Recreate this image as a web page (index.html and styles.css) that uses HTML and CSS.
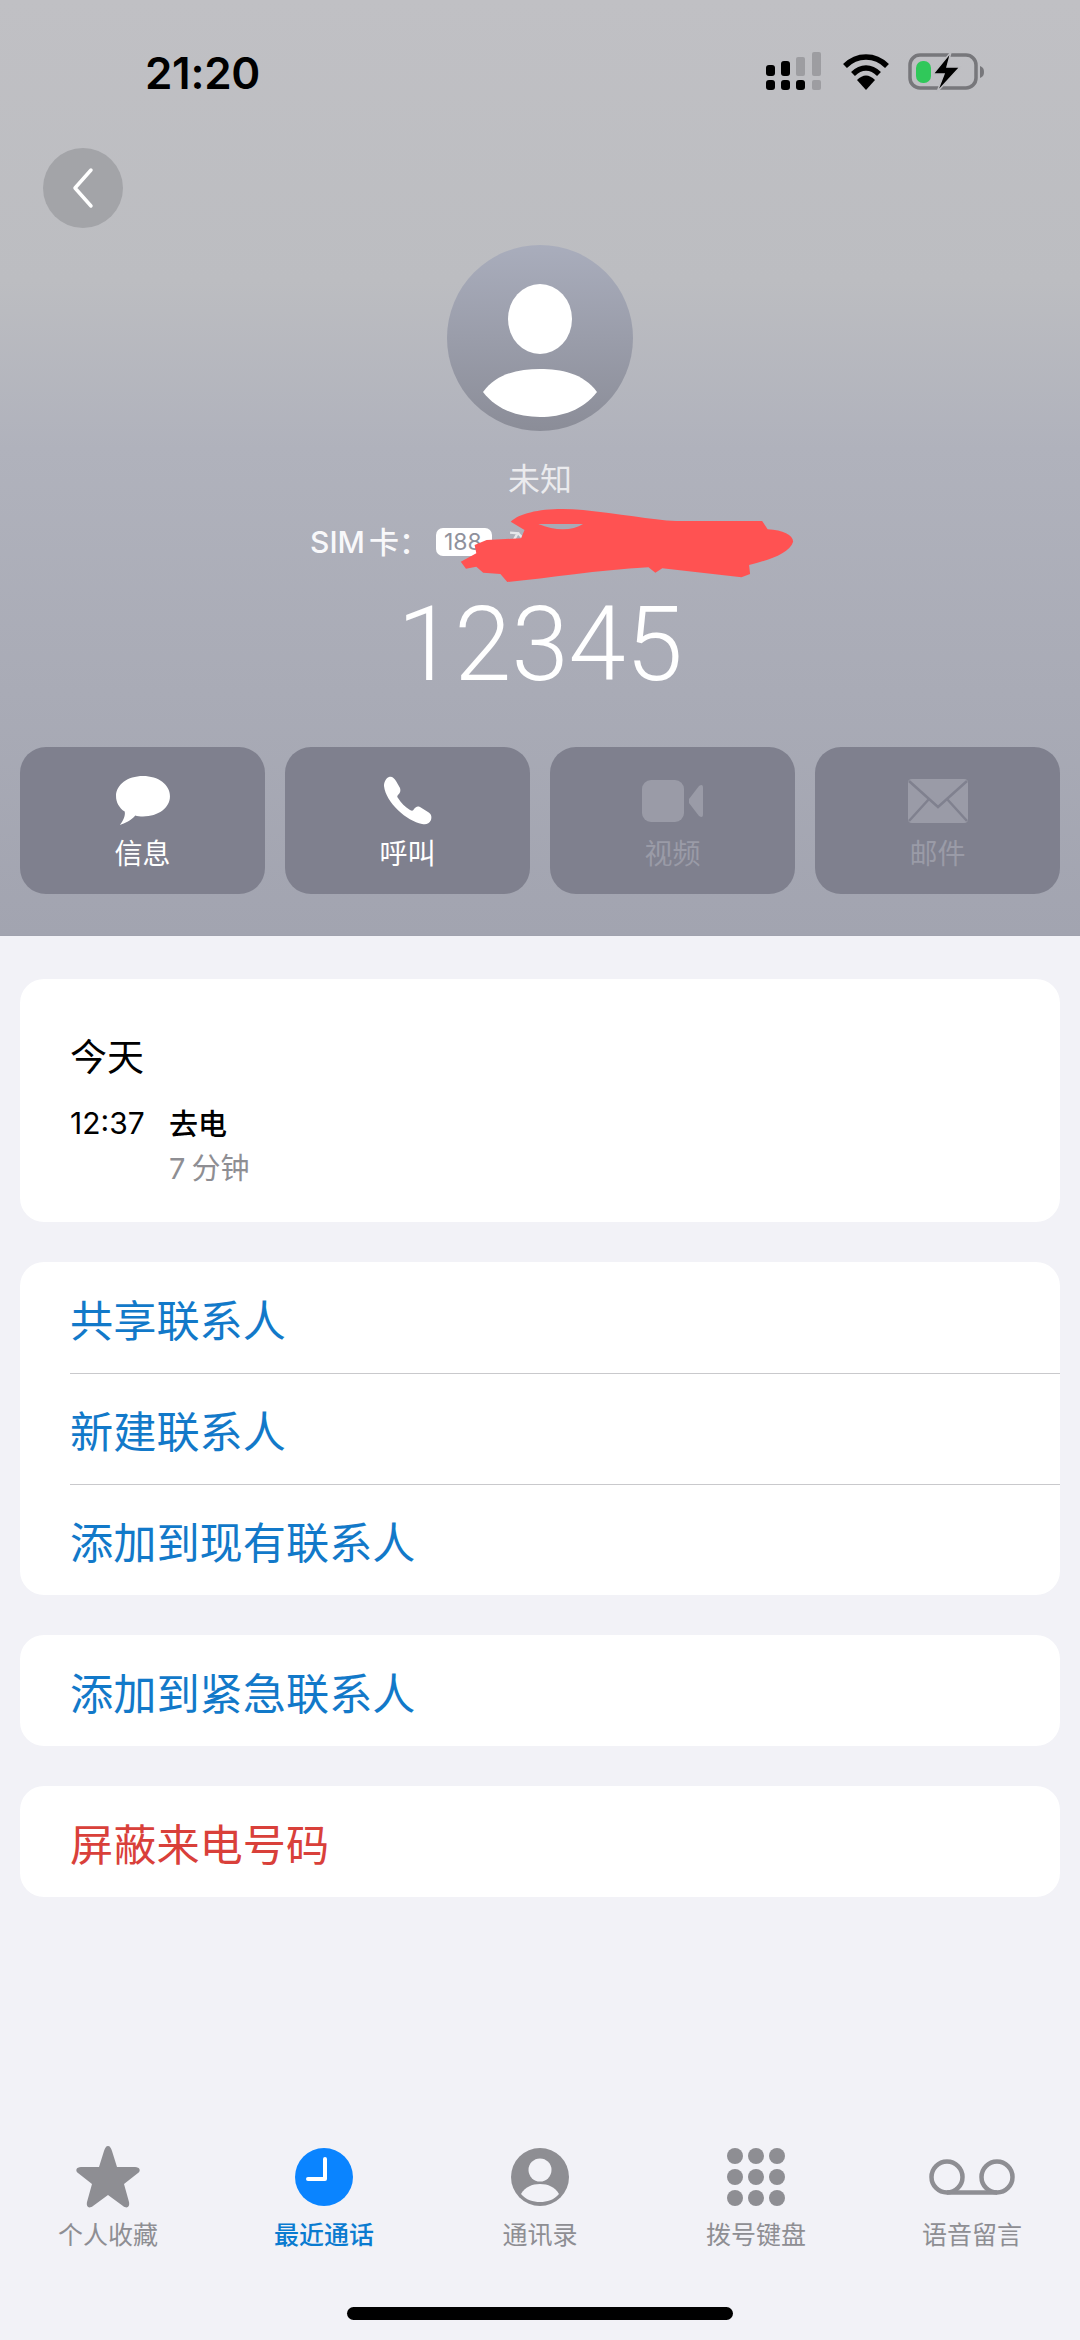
FILE: index.html
```html
<!DOCTYPE html>
<html lang="zh">
<head>
<meta charset="utf-8">
<title>未知</title>
<link rel="stylesheet" href="styles.css">
</head>
<body>
<div class="page">
  <header class="hero">
    <div class="status">
      <span class="clock">21:20</span>
      <div class="status-icons">
        <svg class="sig" width="58" height="40" viewBox="0 0 58 40"><g fill="#000"><rect x="0" y="13" width="9" height="11" rx="3"/><rect x="15" y="9" width="9" height="15" rx="3"/><rect x="0" y="28" width="9" height="10" rx="3"/><rect x="15" y="28" width="9" height="10" rx="3"/><rect x="30" y="28" width="9" height="10" rx="3"/></g><g fill="#9d9da1"><rect x="30" y="5" width="9" height="19" rx="2"/><rect x="46" y="0" width="9" height="24" rx="2"/><rect x="46" y="28" width="9" height="10" rx="2"/></g></svg>
        <svg class="wifi" width="48" height="38" viewBox="0 0 48 38"><g fill="none" stroke="#000" stroke-width="5.5"><path d="M3 13C15 1 33 1 45 13"/><path d="M11 21C19 13 29 13 37 21"/></g><path d="M15 27C21 21 27 21 33 27L24 37Z" fill="#000"/></svg>
        <svg class="batt" width="78" height="40" viewBox="0 0 78 40"><rect x="2" y="3" width="66" height="33" rx="10" fill="none" stroke="#77777b" stroke-width="3.5"/><path d="M72 14c3 1 4 3 4 6s-1 5-4 6z" fill="#77777b"/><rect x="8" y="9" width="15" height="22" rx="7" fill="#30c85a"/><path d="M43 0L25 22H36L29 40L52 15H39Z" fill="#000" stroke="#bdbdc1" stroke-width="1.5"/></svg>
      </div>
    </div>
    <button class="back" type="button"><svg width="24" height="42" viewBox="0 0 24 42"><path d="M20 3L4 21L20 39" fill="none" stroke="#fff" stroke-width="3.5" stroke-linecap="round" stroke-linejoin="round"/></svg></button>
    <div class="avatar">
      <svg width="186" height="186" viewBox="0 0 186 186"><ellipse cx="93" cy="74" rx="32" ry="35" fill="#fff"/><path d="M36 147C50 128 72 124 93 124S136 128 150 147C136 165 115 172 93 172S50 165 36 147Z" fill="#fff"/></svg>
    </div>
    <div class="name">未知</div>
    <div class="sim"><span class="sim-label">SIM 卡：</span><span class="chip">188</span></div>
    <div class="number">12345</div>
    <div class="actions">
      <div class="action">
        <svg width="58" height="54" viewBox="0 0 58 54"><path d="M29 1C45 1 57 10 57 22S45 43 29 43C26 43 23 43 21 42C17 47 10 50 5 52C8 48 11 43 10 38C4 34 1 28 1 22C1 10 13 1 29 1Z" fill="#fff"/></svg>
        <span>信息</span>
      </div>
      <div class="action">
        <svg width="50" height="50" viewBox="0 0 50 50"><path d="M6 1C9 0 11 2 13 5L17 12C18 15 17 17 15 19C14 20 14 21 15 22C18 27 22 31 27 34C29 35 30 35 31 33C33 31 34 30 37 31L45 36C48 38 49 40 48 44C46 48 43 49 39 48C24 45 3 27 1 10C1 6 3 2 6 1Z" fill="#fff"/></svg>
        <span>呼叫</span>
      </div>
      <div class="action off">
        <svg width="62" height="42" viewBox="0 0 62 42"><rect x="0" y="0" width="42" height="42" rx="9" fill="#9a9ba7"/><path d="M47 19L57 6C60 4 61 5 61 8V34C61 37 60 38 57 36L47 23Z" fill="#9a9ba7"/></svg>
        <span>视频</span>
      </div>
      <div class="action off">
        <svg width="60" height="44" viewBox="0 0 60 44"><rect x="0" y="0" width="60" height="44" rx="4" fill="#9a9ba7"/><path d="M1 2L30 28L59 2M1 42L21 20M59 42L39 20" fill="none" stroke="#80818f" stroke-width="2.5"/></svg>
        <span>邮件</span>
      </div>
    </div>
    <svg class="scribble" width="540" height="260" viewBox="0 0 1568 780" preserveAspectRatio="none"><path d="M668 248L690 250L680 268M690 248L708 268" fill="none" stroke="#e6e7ea" stroke-width="7"/><path d="M670 215C700 185 780 170 880 180C980 190 1080 210 1150 213L1400 213L1416 238C1460 240 1490 255 1490 275C1480 310 1420 330 1362 345L1365 372L1340 382L1110 355L1090 368L1070 352C920 360 780 385 660 396L640 372L590 368L570 350L540 356L525 335L570 310L565 285L600 270L700 265L710 240Z" fill="#ff5252"/><path d="M750 222L880 222C850 242 800 244 750 222Z" fill="#a8aab5"/></svg>
  </header>

  <main class="lists">
    <section class="card log">
      <div class="day">今天</div>
      <div class="entry">
        <span class="time">12:37</span>
        <div>
          <div class="kind">去电</div>
          <div class="dur">7 分钟</div>
        </div>
      </div>
    </section>
    <section class="card">
      <div class="row blue">共享联系人</div>
      <div class="row blue">新建联系人</div>
      <div class="row blue">添加到现有联系人</div>
    </section>
    <section class="card"><div class="row blue">添加到紧急联系人</div></section>
    <section class="card"><div class="row red">屏蔽来电号码</div></section>
  </main>

  <nav class="tabs">
    <div class="tab">
      <svg width="66" height="64" viewBox="0 0 66 64"><path d="M33 1C35 1 36 3 37 6L42 22L60 22C65 22 66 26 63 28L49 39L54 57C55 62 52 64 48 61L33 50L18 61C14 64 11 62 12 57L17 39L3 28C0 26 1 22 6 22L24 22L29 6C30 3 31 1 33 1Z" fill="#8e8e93"/></svg>
      <span>个人收藏</span>
    </div>
    <div class="tab on">
      <svg width="60" height="60" viewBox="0 0 60 60"><circle cx="30" cy="30" r="29" fill="#0a84ff"/><path d="M31 12V32H14" fill="none" stroke="#fff" stroke-width="4" stroke-linejoin="round" stroke-linecap="round"/></svg>
      <span>最近通话</span>
    </div>
    <div class="tab">
      <svg width="60" height="60" viewBox="0 0 60 60"><circle cx="30" cy="30" r="29" fill="#8e8e93"/><circle cx="30" cy="23" r="11.5" fill="#f2f2f7"/><path d="M11 47C15 40 22 37 30 37S45 40 49 47C44 53 37 55 30 55S16 53 11 47Z" fill="#f2f2f7"/></svg>
      <span>通讯录</span>
    </div>
    <div class="tab">
      <svg width="60" height="60" viewBox="0 0 60 60"><g fill="#8e8e93"><circle cx="9" cy="9" r="8"/><circle cx="30" cy="9" r="8"/><circle cx="51" cy="9" r="8"/><circle cx="9" cy="30" r="8"/><circle cx="30" cy="30" r="8"/><circle cx="51" cy="30" r="8"/><circle cx="9" cy="51" r="8"/><circle cx="30" cy="51" r="8"/><circle cx="51" cy="51" r="8"/></g></svg>
      <span>拨号键盘</span>
    </div>
    <div class="tab">
      <svg width="86" height="40" viewBox="0 0 86 40"><g fill="none" stroke="#8e8e93" stroke-width="4.5"><circle cx="18" cy="20" r="15.5"/><circle cx="68" cy="20" r="15.5"/><path d="M18 35.5H68"/></g></svg>
      <span>语音留言</span>
    </div>
  </nav>
  <div class="home"></div>
</div>
</body>
</html>
```

FILE: styles.css
```css
* { box-sizing: border-box; }
html, body { margin: 0; padding: 0; }
body { font-family: Inter, "Noto Sans CJK SC", sans-serif; background: #f2f2f7; }
.page { width: 1080px; height: 2340px; display: flex; flex-direction: column; overflow: hidden; background: #f2f2f7; }

.hero { position: relative; height: 936px; flex: none; display: flex; flex-direction: column; align-items: center; background: linear-gradient(#c0c0c4 0%, #bcbdc1 30%, #b0b2bc 48%, #a2a4b0 100%); border-bottom: 1px solid #a0a2ae; }

.status { align-self: stretch; height: 148px; flex: none; display: flex; justify-content: space-between; align-items: flex-start; padding: 48px 94px 0 145px; }
.clock { font-size: 44px; line-height: 50px; font-weight: 600; color: #000; letter-spacing: -0.3px; }
.status-icons { display: flex; align-items: center; gap: 18px; padding-top: 4px; }
.sig, .wifi, .batt { display: block; }

.back { align-self: flex-start; flex: none; width: 80px; height: 80px; margin-left: 43px; padding: 0; border: 0; border-radius: 50%; background: #a3a4a8; display: flex; align-items: center; justify-content: center; }

.avatar { flex: none; width: 186px; height: 186px; margin-top: 17px; border-radius: 50%; overflow: hidden; background: linear-gradient(#a9adbc, #8b8d98); }
.avatar svg { display: block; }

.name { margin-top: 27px; font-size: 32px; line-height: 44px; color: rgba(255,255,255,.75); }

.sim { align-self: flex-start; margin: 18px 0 0 310px; display: flex; align-items: center; font-size: 30px; line-height: 44px; font-weight: 500; color: #f8f8fa; }
.sim-label { word-spacing: -4px; width: 122px; white-space: nowrap; }
.chip { width: 56px; height: 28px; margin-left: 4px; padding-left: 8px; border-radius: 7px; background: #fff; color: #8f919c; font-size: 23px; line-height: 28px; font-weight: 400; }

.number { margin-top: 21px; font-family: Roboto, sans-serif; font-size: 103px; line-height: 120px; font-weight: 300; color: #fff; }

.actions { align-self: stretch; margin-top: 42px; padding: 0 20px; display: grid; grid-template-columns: repeat(4, 1fr); gap: 20px; }
.action { height: 147px; border-radius: 26px; background: #7f808e; display: flex; flex-direction: column; align-items: center; padding-top: 28px; color: #fff; font-size: 28px; line-height: 38px; }
.action svg { height: 52px; flex: none; }
.action span { margin-top: 8px; }
.action.off { color: #9a9ba7; }

.scribble { position: absolute; left: 280px; top: 450px; }

.lists { padding: 43px 20px 0; display: flex; flex-direction: column; gap: 40px; }
.card { background: #fff; border-radius: 24px; overflow: hidden; }

.log { height: 243px; padding: 57px 51px 0 50px; }
.day { font-size: 37px; line-height: 44px; color: #000; }
.entry { margin-top: 23px; display: flex; align-items: flex-start; }
.time { width: 99px; font-size: 30px; line-height: 40px; color: #000; }
.kind { font-size: 29px; line-height: 44px; font-weight: 500; color: #000; }
.dur { margin-top: 1px; font-size: 29px; line-height: 42px; color: #8e8e93; word-spacing: -2px; }

.row { height: 111px; margin-left: 50px; display: flex; align-items: center; font-size: 43.2px; }
.row + .row { border-top: 1px solid #c9c9cc; }
.blue { color: #1279c9; }
.red { color: #d9403a; }

.tabs { margin-top: auto; display: grid; grid-template-columns: repeat(5, 1fr); }
.tab { display: flex; flex-direction: column; align-items: center; color: #8e8e93; font-size: 25px; line-height: 34px; }
.tab svg { height: 64px; flex: none; }
.tab span { margin-top: 9px; }
.tab.on { color: #0a7bd0; font-weight: 500; }

.home { flex: none; width: 386px; height: 13px; margin: 55px auto 20px; border-radius: 7px; background: #000; }
```
